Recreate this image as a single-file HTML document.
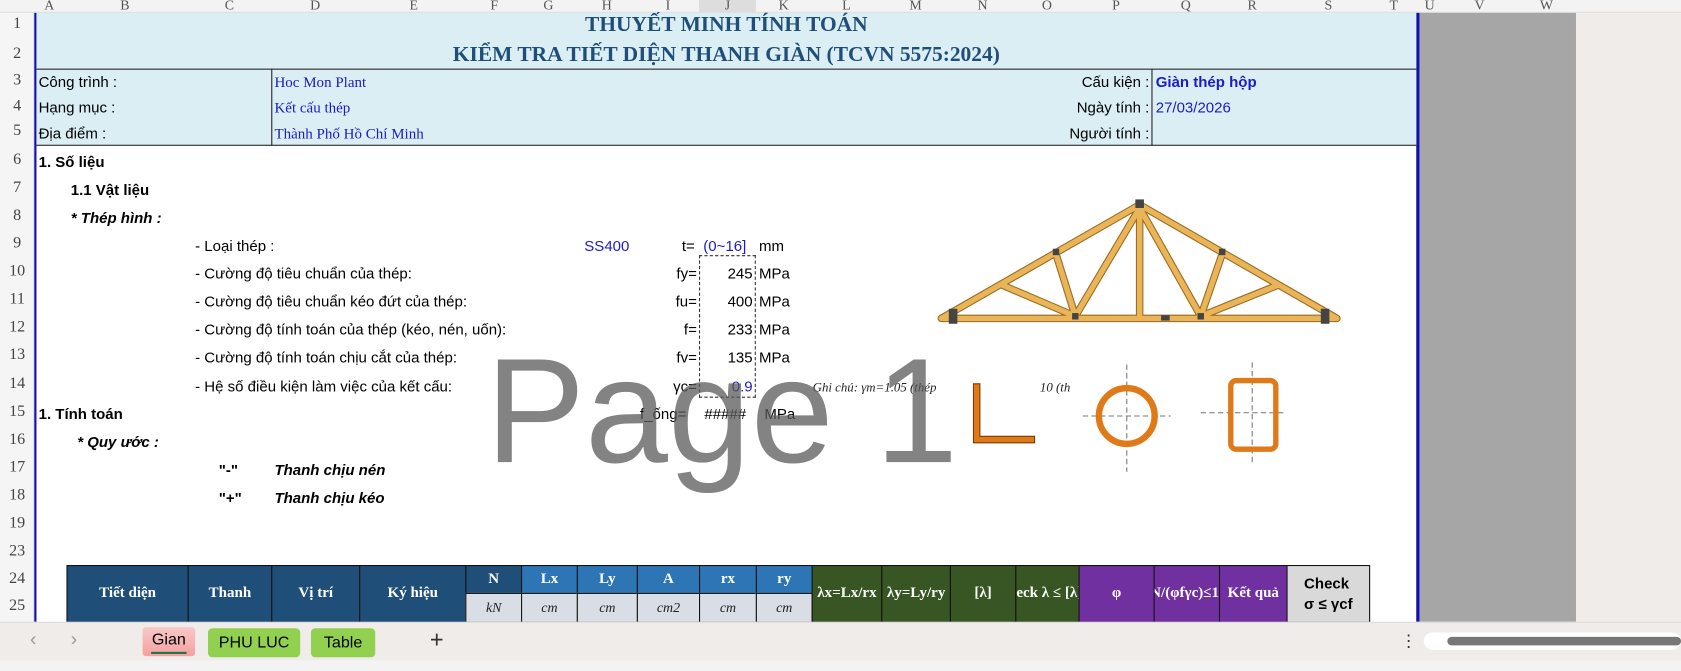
<!DOCTYPE html><html><head><meta charset="utf-8"><style>
*{margin:0;padding:0;box-sizing:border-box}
body{width:1681px;height:671px;overflow:hidden;background:#f0ecea;font-family:"Liberation Sans",sans-serif}
#w{position:absolute;left:0;top:0;width:1568px;height:626px;transform:scale(1.0721);transform-origin:0 0;background:#fff}
.a{position:absolute;white-space:nowrap}
.ch{top:0;height:12px;font:13px "Liberation Serif",serif;color:#555;text-align:center;line-height:9px;overflow:hidden}
.rn{left:0;width:32px;font:15px "Liberation Serif",serif;color:#444;text-align:center}
.t{font-size:14px;color:#000}
.s{font-family:"Liberation Serif",serif;color:#1b1bc8;font-size:14px}
.b{font-weight:bold}
.th{position:absolute;border:1px solid #111;color:#fff;font:bold 14px "Liberation Serif",serif;display:flex;align-items:center;justify-content:center;overflow:hidden;white-space:nowrap}
.u{background:#d9dde6;color:#222;font-style:italic;font-weight:normal;font-size:13px}
</style></head><body><div id="w">
<div class="a" style="left:0;top:0;width:1568px;height:12px;background:#f3f3f3;border-bottom:1px solid #ddd"></div>
<div class="a ch" style="left:34px;width:24px">A</div><div class="a ch" style="left:58px;width:117px">B</div><div class="a ch" style="left:175px;width:78px">C</div><div class="a ch" style="left:253px;width:82px">D</div><div class="a ch" style="left:335px;width:102px">E</div><div class="a ch" style="left:437px;width:48px">F</div><div class="a ch" style="left:485px;width:53px">G</div><div class="a ch" style="left:538px;width:56px">H</div><div class="a ch" style="left:594px;width:58px">I</div><div class="a ch" style="left:652px;width:53px;background:#ddd">J</div><div class="a ch" style="left:705px;width:52px">K</div><div class="a ch" style="left:757px;width:65px">L</div><div class="a ch" style="left:822px;width:64px">M</div><div class="a ch" style="left:886px;width:61px">N</div><div class="a ch" style="left:947px;width:59px">O</div><div class="a ch" style="left:1006px;width:70px">P</div><div class="a ch" style="left:1076px;width:60px">Q</div><div class="a ch" style="left:1136px;width:64px">R</div><div class="a ch" style="left:1200px;width:78px">S</div><div class="a ch" style="left:1278px;width:44px">T</div><div class="a ch" style="left:1322px;width:23px">U</div><div class="a ch" style="left:1345px;width:70px">V</div><div class="a ch" style="left:1415px;width:55px">W</div>
<div class="a" style="left:0;top:12px;width:32px;height:568px;background:#f5f5f5;border-right:1px solid #ddd"></div>
<div class="a rn" style="top:14px">1</div><div class="a rn" style="top:42px">2</div><div class="a rn" style="top:67px">3</div><div class="a rn" style="top:91px">4</div><div class="a rn" style="top:114px">5</div><div class="a rn" style="top:141px">6</div><div class="a rn" style="top:167px">7</div><div class="a rn" style="top:193px">8</div><div class="a rn" style="top:219px">9</div><div class="a rn" style="top:245px">10</div><div class="a rn" style="top:271px">11</div><div class="a rn" style="top:297px">12</div><div class="a rn" style="top:323px">13</div><div class="a rn" style="top:350px">14</div><div class="a rn" style="top:376px">15</div><div class="a rn" style="top:402px">16</div><div class="a rn" style="top:428px">17</div><div class="a rn" style="top:454px">18</div><div class="a rn" style="top:480px">19</div><div class="a rn" style="top:506px">23</div><div class="a rn" style="top:532px">24</div><div class="a rn" style="top:557px">25</div>
<div class="a" style="left:1324px;top:12px;width:146px;height:568px;background:#a6a6a6"></div>
<div class="a" style="left:1470px;top:12px;width:98px;height:568px;background:#f0ecea"></div>
<div class="a" style="left:1321px;top:12px;width:3px;height:568px;background:#1010b0"></div>
<div class="a" style="left:32px;top:12px;width:2px;height:568px;background:#1010b0"></div>
<div class="a" style="left:34px;top:12px;width:1287px;height:124px;background:#daeef3;border-bottom:1px solid #222"></div>
<div class="a" style="left:34px;top:64px;width:1287px;height:1px;background:#222"></div>
<div class="a" style="left:253px;top:64px;width:1px;height:72px;background:#222"></div>
<div class="a" style="left:1074px;top:64px;width:1px;height:72px;background:#222"></div>
<div class="a b" style="left:34px;width:1287px;text-align:center;top:12px;font:bold 20px 'Liberation Serif',serif;color:#1f4e79">THUYẾT MINH TÍNH TOÁN</div>
<div class="a b" style="left:34px;width:1287px;text-align:center;top:40px;font:bold 20px 'Liberation Serif',serif;color:#1f4e79">KIỂM TRA TIẾT DIỆN THANH GIÀN (TCVN 5575:2024)</div>
<div class="a t" style="left:36px;top:68px">Công trình :</div><div class="a t" style="left:36px;top:92px">Hạng mục :</div><div class="a t" style="left:36px;top:116px">Địa điểm :</div>
<div class="a s" style="left:256px;top:70px">Hoc Mon Plant</div><div class="a s" style="left:256px;top:94px">Kết cấu thép</div><div class="a s" style="left:256px;top:118px">Thành Phố Hồ Chí Minh</div>
<div class="a t" style="right:496px;top:68px">Cấu kiện :</div><div class="a t" style="right:496px;top:92px">Ngày tính :</div><div class="a t" style="right:496px;top:116px">Người tính :</div>
<div class="a b" style="left:1078px;top:68px;font-size:14px;color:#1b1bc8">Giàn thép hộp</div><div class="a" style="left:1078px;top:92px;font-size:14px;color:#1b1bc8">27/03/2026</div>
<div class="a t b" style="left:36px;top:143px">1. Số liệu</div>
<div class="a t b" style="left:66px;top:169px">1.1 Vật liệu</div>
<div class="a t b" style="left:66px;top:195px;font-style:italic">* Thép hình :</div>
<div class="a t" style="left:182px;top:221px">- Loại thép :</div>
<div class="a" style="left:545px;top:221px;font-size:14px;color:#1b1bc8">SS400</div>
<div class="a t" style="left:636px;top:221px">t=</div><div class="a" style="left:656px;top:221px;font-size:14px;color:#1b1bc8">(0~16]</div><div class="a t" style="left:708px;top:221px">mm</div>
<div class="a t" style="left:182px;top:247px">- Cường độ tiêu chuẩn của thép:</div>
<div class="a t" style="left:182px;top:273px">- Cường độ tiêu chuẩn kéo đứt của thép:</div>
<div class="a t" style="left:182px;top:299px">- Cường độ tính toán của thép (kéo, nén, uốn):</div>
<div class="a t" style="left:182px;top:325px">- Cường độ tính toán chịu cắt của thép:</div>
<div class="a t" style="left:182px;top:352px">- Hệ số điều kiện làm việc của kết cấu:</div>
<div class="a" style="left:652px;top:238px;width:53px;height:133px;border:1px dashed #333"></div>
<div class="a t" style="right:918px;top:247px">fy=</div><div class="a t" style="right:866px;top:247px">245</div><div class="a t" style="left:708px;top:247px">MPa</div>
<div class="a t" style="right:918px;top:273px">fu=</div><div class="a t" style="right:866px;top:273px">400</div><div class="a t" style="left:708px;top:273px">MPa</div>
<div class="a t" style="right:918px;top:299px">f=</div><div class="a t" style="right:866px;top:299px">233</div><div class="a t" style="left:708px;top:299px">MPa</div>
<div class="a t" style="right:918px;top:325px">fv=</div><div class="a t" style="right:866px;top:325px">135</div><div class="a t" style="left:708px;top:325px">MPa</div>
<div class="a t" style="right:918px;top:352px">γc=</div><div class="a" style="right:866px;top:352px;font-size:14px;color:#1b1bc8">0.9</div>
<div class="a" style="left:758px;top:354px;font:italic 12px 'Liberation Serif',serif;color:#222">Ghi chú: γm=1.05 (thép</div>
<div class="a" style="left:970px;top:354px;font:italic 12px 'Liberation Serif',serif;color:#222">10 (th</div>
<div class="a t b" style="left:36px;top:378px">1. Tính toán</div>
<div class="a t" style="left:597px;top:378px">f_ống=</div><div class="a t" style="left:657px;top:378px">#####</div><div class="a t" style="left:713px;top:378px">MPa</div>
<div class="a t b" style="left:72px;top:404px;font-style:italic">* Quy ước :</div>
<div class="a t b" style="left:204px;top:430px">"-"</div><div class="a t b" style="left:256px;top:430px;font-style:italic">Thanh chịu nén</div>
<div class="a t b" style="left:204px;top:456px">"+"</div><div class="a t b" style="left:256px;top:456px;font-style:italic">Thanh chịu kéo</div>
<svg class="a" style="left:860px;top:180px" width="400" height="130" viewBox="860 180 400 130" fill="none">
<g stroke="#9a6a20" stroke-width="7" stroke-linecap="round"><path d="M878 297L1063 191L1247 297M880 297H1245M985 237L1003 295M1063 194L1003 295M1063 194V295M1063 194L1120 295M1140 237L1120 295M935 266L1003 295M1192 266L1120 295"/></g>
<g stroke="#eab458" stroke-width="5" stroke-linecap="round"><path d="M878 297L1063 191L1247 297M880 297H1245M985 237L1003 295M1063 194L1003 295M1063 194V295M1063 194L1120 295M1140 237L1120 295M935 266L1003 295M1192 266L1120 295"/></g>
<g fill="#444"><rect x="885" y="288" width="8" height="14"/><rect x="1232" y="288" width="8" height="14"/><rect x="1059" y="186" width="8" height="8"/><rect x="982" y="232" width="6" height="6"/><rect x="1137" y="232" width="6" height="6"/><rect x="1000" y="292" width="6" height="6"/><rect x="1117" y="292" width="6" height="6"/><rect x="1083" y="294" width="8" height="5"/></g>
</svg>
<svg class="a" style="left:890px;top:320px" width="330" height="130" viewBox="890 320 330 130">
<path d="M908 358V413H965V407H914V358Z" fill="#e07a18" stroke="#7a3a00"/>
<g stroke="#777" stroke-dasharray="5 3" stroke-width="1"><path d="M1010 388H1092M1051 340V440M1120 385H1200M1168 338V432"/></g>
<circle cx="1051" cy="388" r="26" fill="none" stroke="#e07a18" stroke-width="6"/>
<rect x="1148" y="355" width="42" height="64" rx="5" fill="none" stroke="#e07a18" stroke-width="5"/>
</svg>
<div class="a" style="left:453px;top:314px;font:139px 'Liberation Sans',sans-serif;color:rgba(90,90,90,0.75);line-height:139px">Page 1</div>
<div class="th" style="left:62px;top:527px;width:114px;height:54px;background:#1f4e79">Tiết diện</div>
<div class="th" style="left:175px;top:527px;width:79px;height:54px;background:#1f4e79">Thanh</div>
<div class="th" style="left:253px;top:527px;width:83px;height:54px;background:#1f4e79">Vị trí</div>
<div class="th" style="left:335px;top:527px;width:100px;height:54px;background:#1f4e79">Ký hiệu</div>
<div class="th" style="left:434px;top:527px;width:53px;height:27px;background:#1f4e79">N</div>
<div class="th" style="left:486px;top:527px;width:53px;height:27px;background:#2e75b6">Lx</div>
<div class="th" style="left:538px;top:527px;width:57px;height:27px;background:#2e75b6">Ly</div>
<div class="th" style="left:594px;top:527px;width:59px;height:27px;background:#2e75b6">A</div>
<div class="th" style="left:652px;top:527px;width:54px;height:27px;background:#2e75b6">rx</div>
<div class="th" style="left:705px;top:527px;width:53px;height:27px;background:#2e75b6">ry</div>
<div class="th u" style="left:434px;top:553px;width:53px;height:28px">kN</div>
<div class="th u" style="left:486px;top:553px;width:53px;height:28px">cm</div>
<div class="th u" style="left:538px;top:553px;width:57px;height:28px">cm</div>
<div class="th u" style="left:594px;top:553px;width:59px;height:28px">cm2</div>
<div class="th u" style="left:652px;top:553px;width:54px;height:28px">cm</div>
<div class="th u" style="left:705px;top:553px;width:53px;height:28px">cm</div>
<div class="th" style="left:757px;top:527px;width:66px;height:54px;background:#375623">λx=Lx/rx</div>
<div class="th" style="left:822px;top:527px;width:65px;height:54px;background:#375623">λy=Ly/ry</div>
<div class="th" style="left:886px;top:527px;width:62px;height:54px;background:#375623">[λ]</div>
<div class="th" style="left:947px;top:527px;width:60px;height:54px;background:#375623;justify-content:flex-start">eck λ ≤ [λ]</div>
<div class="th" style="left:1006px;top:527px;width:71px;height:54px;background:#7030a0">φ</div>
<div class="th" style="left:1076px;top:527px;width:62px;height:54px;background:#7030a0;justify-content:flex-end">N/(φfγc)≤1</div>
<div class="th" style="left:1137px;top:527px;width:64px;height:54px;background:#7030a0">Kết quả</div>
<div class="th" style="left:1200px;top:527px;width:78px;height:54px;background:#d9d9d9;color:#000;font-family:'Liberation Sans',sans-serif;flex-direction:column;line-height:19px">Check<br>σ ≤ γcf</div>
<div class="a" style="left:0;top:580px;width:1568px;height:36px;background:#f0ecea;border-top:1px solid #ddd"></div>
<div class="a" style="left:28px;top:586px;font-size:18px;color:#999">‹</div><div class="a" style="left:66px;top:586px;font-size:18px;color:#999">›</div>
<div class="a" style="left:133px;top:585px;width:49px;height:27px;background:linear-gradient(#f8c8c8,#f4a0a0);border-radius:3px;font-size:15px;text-align:center;line-height:24px">Gian<div style="position:absolute;left:8px;right:8px;bottom:2px;height:2px;background:#217346"></div></div>
<div class="a" style="left:194px;top:586px;width:86px;height:27px;background:#92d050;border-radius:4px;font-size:15px;text-align:center;line-height:27px">PHU LUC</div>
<div class="a" style="left:290px;top:586px;width:60px;height:27px;background:#92d050;border-radius:4px;font-size:15px;text-align:center;line-height:27px">Table</div>
<div class="a" style="left:401px;top:584px;font-size:22px;color:#333">+</div>
<div class="a" style="left:1306px;top:588px;font-size:16px;color:#333">⋮</div>
<div class="a" style="left:1328px;top:590px;width:240px;height:16px;background:#fff;border-radius:8px"></div>
<div class="a" style="left:1350px;top:594px;width:218px;height:8px;background:#777;border-radius:4px"></div>
<div class="a" style="left:0;top:616px;width:1568px;height:10px;background:#f3f3f3"></div>
</div></body></html>
